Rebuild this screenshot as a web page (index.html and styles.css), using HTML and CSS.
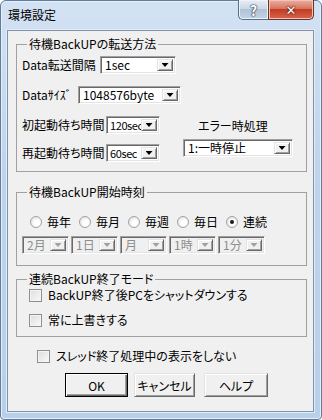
FILE: index.html
```html
<!DOCTYPE html>
<html lang="ja">
<head>
    <meta charset="UTF-8">
    <title>環境設定</title>
    <link rel="stylesheet" href="styles.css">
</head>
<body>
    <div class="window">
        <div class="titlebar">
            <span class="title">環境設定</span>
            <div class="caption-btns">
                <span class="cap-btn cap-help">?</span>
                <span class="cap-btn cap-close">✕</span>
            </div>
        </div>

        <div class="client">
            <!-- transfer settings -->
            <fieldset class="group g-transfer">
                <legend>待機BackUPの転送方法</legend>
                <div class="row">
                    <span class="lbl lbl-interval">Data転送間隔</span>
                    <div class="combo c-interval"><span class="val">1sec</span><span class="drop"></span></div>
                </div>
                <div class="row row-size">
                    <span class="lbl lbl-size">Dataｻｲｽﾞ</span>
                    <div class="combo c-size"><span class="val">1048576byte</span><span class="drop"></span></div>
                </div>
                <div class="wait-block">
                    <div class="wait-col">
                        <div class="row">
                            <span class="lbl lbl-wait">初起動待ち時間</span>
                            <div class="combo c-wait"><span class="val">120sec</span><span class="drop"></span></div>
                        </div>
                        <div class="row row-restart">
                            <span class="lbl lbl-wait">再起動待ち時間</span>
                            <div class="combo c-wait"><span class="val">60sec</span><span class="drop"></span></div>
                        </div>
                    </div>
                    <div class="error-col">
                        <span class="error-lbl">エラー時処理</span>
                        <div class="combo c-error"><span class="val">1:一時停止</span><span class="drop"></span></div>
                    </div>
                </div>
            </fieldset>

            <!-- start time -->
            <fieldset class="group g-start">
                <legend>待機BackUP開始時刻</legend>
                <div class="radios">
                    <label class="radio"><span class="dot"></span>毎年</label>
                    <label class="radio"><span class="dot"></span>毎月</label>
                    <label class="radio"><span class="dot"></span>毎週</label>
                    <label class="radio"><span class="dot"></span>毎日</label>
                    <label class="radio"><span class="dot checked"></span>連続</label>
                </div>
                <div class="time-combos">
                    <div class="combo off c-time"><span class="val">2月</span><span class="drop"></span></div>
                    <div class="combo off c-time"><span class="val">1日</span><span class="drop"></span></div>
                    <div class="combo off c-time"><span class="val">月</span><span class="drop"></span></div>
                    <div class="combo off c-time"><span class="val">1時</span><span class="drop"></span></div>
                    <div class="combo off c-time"><span class="val">1分</span><span class="drop"></span></div>
                </div>
            </fieldset>

            <!-- end mode -->
            <fieldset class="group g-end">
                <legend>連続BackUP終了モード</legend>
                <label class="check"><span class="box"></span>BackUP終了後PCをシャットダウンする</label>
                <label class="check check-2"><span class="box"></span>常に上書きする</label>
            </fieldset>

            <label class="check check-thread"><span class="box"></span>スレッド終了処理中の表示をしない</label>

            <div class="buttons">
                <button class="btn btn-ok default">OK</button>
                <button class="btn btn-cancel">キャンセル</button>
                <button class="btn btn-help">ヘルプ</button>
            </div>
        </div>
    </div>
</body>
</html>
```

FILE: styles.css
```css
/* dialog frame */

body {
    margin: 0;
    background: #ffffff;
    font-family: "Noto Sans CJK JP", "DejaVu Sans", sans-serif;
    font-size: 12px;
    font-feature-settings: "palt";
    color: #000;
}

.window {
    width: 322px;
    height: 420px;
    box-sizing: border-box;
    border: 1px solid #5e7c9f;
    border-radius: 6px 6px 4px 4px;
    background: linear-gradient(#d3e2f3, #bfd4ec 40%, #b9d0ea);
    box-shadow: inset 0 0 0 1px #e6eef8;
}

.titlebar {
    height: 29px;
    display: flex;
    justify-content: space-between;
    align-items: flex-start;
    padding-left: 7px;
}

.title {
    margin-top: 6px;
    line-height: 16px;
}

.caption-btns {
    display: flex;
    margin-right: 7px;
    margin-top: -1px;
}

.cap-btn {
    height: 20px;
    box-sizing: border-box;
    display: flex;
    align-items: center;
    justify-content: center;
    font-weight: bold;
    color: #fff;
    border: 1px solid #54708f;
    border-top: none;
    text-shadow: 0 0 1px #2c3d52, 0 0 1px #2c3d52, 0 0 2px #2c3d52;
}

.cap-help {
    width: 30px;
    border-radius: 0 0 0 5px;
    border-right: none;
    font-size: 14px;
    background: linear-gradient(#e7edf5, #ccd8e6 45%, #b2c3d7 50%, #c4d3e3);
    box-shadow: inset 0 0 0 1px #eef3f9;
}

.cap-close {
    width: 46px;
    border-radius: 0 0 5px 0;
    border-color: #6b3229;
    font-size: 13px;
    background: linear-gradient(#eab0a2, #d8745f 45%, #c23c22 50%, #d8654b);
    box-shadow: inset 0 0 0 1px #f0c4b8;
    text-shadow: 0 0 1px #4d160d, 0 0 1px #4d160d, 0 0 2px #4d160d;
}

.client {
    margin: 0 7px 0 6px;
    height: 382px;
    box-sizing: border-box;
    border: 1px solid #8093ab;
    background: #f0f0f0;
    padding: 0 6px 0 8px;
    box-shadow: 0 0 0 1px #e2ebf6;
}

/* group boxes */

.group {
    margin: 5px 0 0;
    padding: 4px 0 9px 5px;
    border: 1px solid #a0a0a0;
    min-width: 0;
}

.group legend {
    margin-left: 5px;
    padding: 0 2px;
    line-height: 16px;
}

.g-start {
    margin-top: 12px;
    padding-top: 14px;
    padding-bottom: 11px;
}

.g-end {
    margin-top: 5px;
    padding-top: 0;
    padding-bottom: 8px;
}

.row {
    display: flex;
    align-items: center;
    height: 18px;
}

.row-size {
    margin-top: 12px;
}

.lbl {
    line-height: 16px;
    white-space: nowrap;
}

.lbl-interval { width: 78px; }
.lbl-size { width: 56px; }
.lbl-wait { width: 84px; }

.wait-block {
    display: flex;
    margin-top: 12px;
}

.row-restart {
    margin-top: 10px;
}

.error-col {
    display: flex;
    flex-direction: column;
    margin-left: 23px;
}

.error-lbl {
    margin: 2px 0 0 15px;
    line-height: 16px;
}

.c-error {
    margin-top: 5px;
}

/* combo boxes */

.combo {
    display: flex;
    align-items: stretch;
    height: 18px;
    box-sizing: border-box;
    border: 1px solid;
    border-color: #a0a0a0 #ffffff #ffffff #a0a0a0;
    box-shadow: inset 1px 1px 0 #696969, inset -1px -1px 0 #e3e3e3;
    background: #fff;
    padding: 1px 2px;
}

.combo .val {
    flex: 1;
    min-width: 0;
    white-space: nowrap;
    padding-left: 2px;
    line-height: 14px;
    font-size: 12px;
}

/* narrow boxes: condensed value, the long one still runs under the button */
.c-wait .val {
    padding-left: 1px;
    font-size: 11px;
    letter-spacing: -0.4px;
    overflow-x: clip;
}

.combo .drop {
    width: 16px;
    flex: none;
    margin: 1px 0;
    box-sizing: border-box;
    display: flex;
    align-items: center;
    justify-content: center;
    background: #f0f0f0;
    border: 1px solid;
    border-color: #e3e3e3 #696969 #696969 #e3e3e3;
    box-shadow: inset 1px 1px 0 #fff, inset -1px -1px 0 #a0a0a0;
}

.combo .drop::after {
    content: "";
    width: 7px;
    height: 4px;
    background: #000;
    clip-path: polygon(0 0, 100% 0, 50% 100%);
}

.c-interval { width: 76px; }
.c-size { width: 103px; }
.c-wait { width: 54px; }
.c-error { width: 110px; }

.combo.off {
    background: #f0f0f0;
}

.combo.off .val {
    color: #8d8d8d;
}

.combo.off .drop::after {
    background: #a0a0a0;
}

/* start time radios */

.radios {
    display: flex;
    height: 16px;
    margin-left: 8px;
}

.radio {
    width: 49px;
    display: flex;
    align-items: center;
    line-height: 16px;
}

.dot {
    width: 12px;
    height: 12px;
    box-sizing: border-box;
    border-radius: 50%;
    border: 1px solid #a2a2a2;
    background: radial-gradient(circle at 60% 60%, #ffffff 30%, #e2e2e2 80%);
    margin-right: 5px;
    position: relative;
}

.dot.checked::after {
    content: "";
    position: absolute;
    left: 3px;
    top: 3px;
    width: 4px;
    height: 4px;
    border-radius: 50%;
    background: #1a1a1a;
}

.time-combos {
    display: flex;
    gap: 2px;
    margin-top: 6px;
}

.c-time { width: 47px; }

/* check boxes */

.check {
    display: flex;
    align-items: center;
    height: 16px;
    line-height: 16px;
    margin-left: 7px;
    white-space: nowrap;
}

.check-2 {
    margin-top: 9px;
}

.check-thread {
    margin: 11px 0 0 21px;
}

.box {
    width: 13px;
    height: 13px;
    box-sizing: border-box;
    border: 1px solid #8f8f8f;
    background: linear-gradient(135deg, #dcdcdc, #fafafa);
    box-shadow: inset 0 0 0 1px #f4f4f4;
    margin-right: 6px;
}

/* bottom buttons */

.buttons {
    display: flex;
    margin: 9px 0 0 49px;
}

.btn {
    height: 24px;
    box-sizing: border-box;
    font-family: inherit;
    font-size: 12px;
    font-feature-settings: "palt";
    white-space: nowrap;
    padding: 0;
    background: #f0f0f0;
    border: 1px solid;
    border-color: #e3e3e3 #696969 #696969 #e3e3e3;
    box-shadow: inset 1px 1px 0 #fff, inset -1px -1px 0 #a0a0a0;
    color: #000;
}

.btn.default {
    border-color: #000;
    box-shadow: inset 1px 1px 0 #fff, inset -1px -1px 0 #696969, inset -2px -2px 0 #a0a0a0;
}

.btn-ok { width: 63px; }
.btn-cancel { width: 61px; margin-left: 6px; }
.btn-help { width: 64px; margin-left: 9px; }
```
